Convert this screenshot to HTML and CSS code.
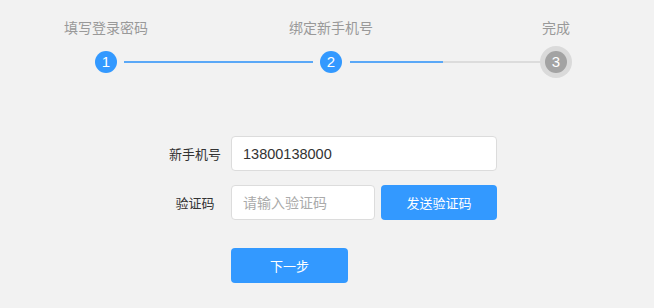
FILE: index.html
```html
<!DOCTYPE html>
<html lang="zh-CN">
<head>
<meta charset="utf-8">
<title>绑定新手机号</title>
<link rel="stylesheet" href="styles.css">
</head>
<body>
<div class="page">
  <div class="step-labels">
    <div class="step-label">填写登录密码</div>
    <div class="step-label">绑定新手机号</div>
    <div class="step-label">完成</div>
  </div>
  <div class="steps">
    <div class="dot active">1</div>
    <div class="line line-1"></div>
    <div class="dot active">2</div>
    <div class="line line-2"><div class="line-fill"></div></div>
    <div class="dot-ring"><div class="dot pending">3</div></div>
  </div>
  <form class="form">
    <div class="row">
      <label class="label">新手机号</label>
      <input class="input input-wide" type="text" value="13800138000">
    </div>
    <div class="row">
      <label class="label">验证码</label>
      <input class="input input-code" type="text" placeholder="请输入验证码">
      <button class="btn btn-send" type="button">发送验证码</button>
    </div>
    <div class="row row-submit">
      <button class="btn btn-next" type="button">下一步</button>
    </div>
  </form>
</div>
</body>
</html>
```
FILE: styles.css
```css
* { box-sizing: border-box; }
html, body {
  margin: 0;
  padding: 0;
  background: #f2f2f2;
}
body {
  font-family: "Liberation Sans", "Noto Sans CJK SC", sans-serif;
  color: #333;
  width: 654px;
  height: 308px;
  overflow: hidden;
}
.page {
  padding-top: 18px;
}
.step-labels {
  display: flex;
  padding-left: 46px;
  gap: 105px;
}
.step-label {
  width: 120px;
  text-align: center;
  font-size: 14px;
  line-height: 20px;
  color: #999;
}
.steps {
  display: flex;
  align-items: center;
  height: 32px;
  margin-top: 8px;
  padding-left: 95px;
}
.dot {
  width: 22px;
  height: 22px;
  border-radius: 50%;
  color: #fff;
  font-size: 15px;
  line-height: 22px;
  text-align: center;
  flex: none;
}
.dot.active {
  background: #3399ff;
}
.dot.pending {
  background: #a3a3a3;
}
.dot-ring {
  width: 32px;
  height: 32px;
  border-radius: 50%;
  background: #dadada;
  display: flex;
  align-items: center;
  justify-content: center;
  flex: none;
}
.line {
  height: 2px;
  flex: none;
}
.line-1 {
  width: 189px;
  margin: 0 7px;
  background: #5aa8f7;
}
.line-2 {
  width: 190px;
  margin-left: 8px;
  background: #dcdcdc;
}
.line-fill {
  width: 93px;
  height: 2px;
  background: #5aa8f7;
}
.form {
  margin: 58px 0 0 0;
  padding-left: 159px;
}
.row {
  display: flex;
  align-items: center;
  height: 35px;
  margin-bottom: 14px;
}
.row-submit {
  margin-top: 28px;
  padding-left: 72px;
}
.label {
  width: 72px;
  text-align: center;
  font-size: 13px;
  color: #333;
}
.input {
  height: 35px;
  border: 1px solid #dcdcdc;
  border-radius: 4px;
  background: #fff;
  padding: 0 11px;
  font-family: "Liberation Sans", "Noto Sans CJK SC", sans-serif;
  font-size: 14.5px;
  color: #333;
  outline: none;
}
.input::placeholder {
  color: #aaa;
  font-size: 14px;
}
.input-wide {
  width: 266px;
}
.input-code {
  width: 144px;
}
.btn {
  height: 35px;
  border: none;
  border-radius: 4px;
  background: #3399ff;
  color: #fff;
  font-family: "Liberation Sans", "Noto Sans CJK SC", sans-serif;
  font-size: 13px;
  padding: 0;
  cursor: pointer;
}
.btn-send {
  width: 116px;
  margin-left: 6px;
}
.btn-next {
  width: 117px;
}
```
